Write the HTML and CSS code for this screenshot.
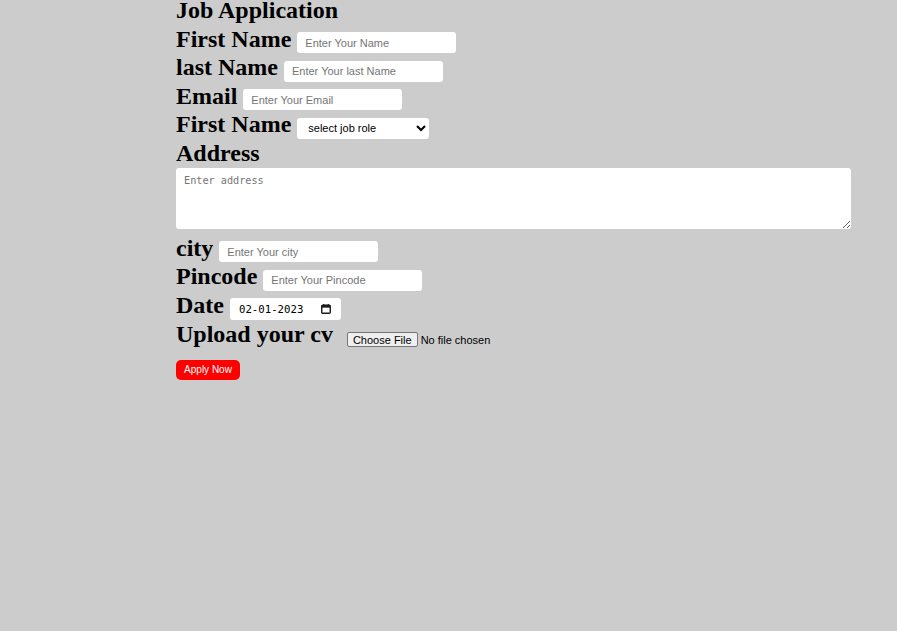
FILE: index.html
```html
<!DOCTYPE html>
<html lang="en">
<head>
<meta charset="utf-8">
<title>Job Application</title>
<link rel="stylesheet" href="styles.css">
</head>
<body>
<main class="page">
  <h1 class="title">Job Application</h1>
  <form class="form">
    <div class="row"><label class="label" for="fname">First Name</label> <input class="field" id="fname" type="text" placeholder="Enter Your Name"></div>
    <div class="row"><label class="label" for="lname">last Name</label> <input class="field" id="lname" type="text" placeholder="Enter Your last Name"></div>
    <div class="row"><label class="label" for="email">Email</label> <input class="field" id="email" type="email" placeholder="Enter Your Email"></div>
    <div class="row"><label class="label" for="role">First Name</label> <select class="select" id="role"><option>select job role</option><option>Developer</option><option>Designer</option></select></div>
    <div class="row"><label class="label" for="addr">Address</label></div>
    <div class="row-area"><textarea class="area" id="addr" placeholder="Enter address"></textarea></div>
    <div class="row"><label class="label" for="city">city</label> <input class="field" id="city" type="text" placeholder="Enter Your city"></div>
    <div class="row"><label class="label" for="pin">Pincode</label> <input class="field" id="pin" type="text" placeholder="Enter Your Pincode"></div>
    <div class="row"><label class="label" for="date">Date</label> <span class="date"><input class="date-text" id="date" type="text" value="02-01-2023" readonly><svg class="cal" width="10" height="10" viewBox="0 0 10 10"><rect x="0.75" y="1.25" width="8.5" height="8" rx="1" fill="none" stroke="#1a1a1a" stroke-width="1.4"/><rect x="0.75" y="1.25" width="8.5" height="2.4" fill="#1a1a1a"/><rect x="2.2" y="0" width="1.2" height="2" fill="#1a1a1a"/><rect x="6.6" y="0" width="1.2" height="2" fill="#1a1a1a"/></svg></span></div>
    <div class="row"><label class="label" for="cv">Upload your cv</label> <input class="file" id="cv" type="file"></div>
    <div class="actions"><button class="apply" type="button">Apply Now</button></div>
  </form>
</main>
</body>
</html>
```
FILE: styles.css
```css
html, body {
  margin: 0;
  padding: 0;
  background: #cccccc;
}
body {
  min-height: 631px;
}
.page {
  padding-left: 176px;
  width: 676px;
  font-family: "Liberation Serif", "Times New Roman", serif;
}
.title {
  margin: 0 0 3.2px;
  font-size: 24px;
  font-weight: bold;
  line-height: 21.5px;
}
.form {
  margin: 0;
}
.row {
  height: 28.6px;
  line-height: 28.6px;
  font-size: 24px;
  font-weight: bold;
  color: #000;
  white-space: nowrap;
}
.label {
  font: inherit;
}
.field {
  box-sizing: border-box;
  width: 159px;
  height: 21px;
  border: none;
  border-radius: 3px;
  padding: 0 8px;
  background: #fff;
  font-family: "Liberation Sans", Arial, sans-serif;
  font-size: 11px;
  font-weight: normal;
  color: #000;
  outline: none;
}
.field::placeholder {
  color: #757575;
}
.select {
  box-sizing: border-box;
  width: 132px;
  height: 21px;
  border: none;
  border-radius: 3px;
  padding: 0 4px 0 7px;
  background: #fff;
  font-family: "Liberation Sans", Arial, sans-serif;
  font-size: 11px;
  font-weight: normal;
  color: #000;
}
.row-area {
  line-height: 0;
  padding: 0 0 5.1px;
}
.area {
  box-sizing: border-box;
  width: 675px;
  height: 61px;
  border: none;
  border-radius: 3px;
  padding: 7px 8px;
  background: #fff;
  font-family: "DejaVu Sans Mono", "Liberation Mono", monospace;
  font-size: 10.2px;
  line-height: 1.2;
  outline: none;
  resize: vertical;
  margin: 0;
}
.area::placeholder {
  color: #757575;
}
.date {
  display: inline-flex;
  align-items: center;
  box-sizing: border-box;
  width: 111px;
  height: 22px;
  padding: 0 10px 0 9px;
  background: #fff;
  border-radius: 3px;
  vertical-align: baseline;
  line-height: normal;
}
.date-text {
  width: 70px;
  border: none;
  padding: 0;
  margin: 0;
  background: transparent;
  font-family: "DejaVu Sans Mono", "Liberation Mono", monospace;
  font-size: 10.7px;
  font-weight: normal;
  color: #000;
  outline: none;
}
.cal {
  margin-left: auto;
}
.file {
  margin-left: 8px;
  vertical-align: -2px;
  font-family: "Liberation Sans", Arial, sans-serif;
  font-size: 11px;
  font-weight: normal;
  color: #000;
}
.file::file-selector-button {
  box-sizing: border-box;
  height: 15px;
  margin: 0 3px 0 0;
  padding: 0 5px;
  border: 1px solid #767676;
  border-radius: 2px;
  background: #efefef;
  color: #000;
  font-family: "Liberation Sans", Arial, sans-serif;
  font-size: 11px;
}
.actions {
  padding-top: 11.2px;
}
.apply {
  box-sizing: border-box;
  width: 64px;
  height: 20px;
  border: none;
  border-radius: 5px;
  padding: 0;
  background: #ff0000;
  color: #fff;
  font-family: "Liberation Sans", Arial, sans-serif;
  font-size: 10px;
}
```
